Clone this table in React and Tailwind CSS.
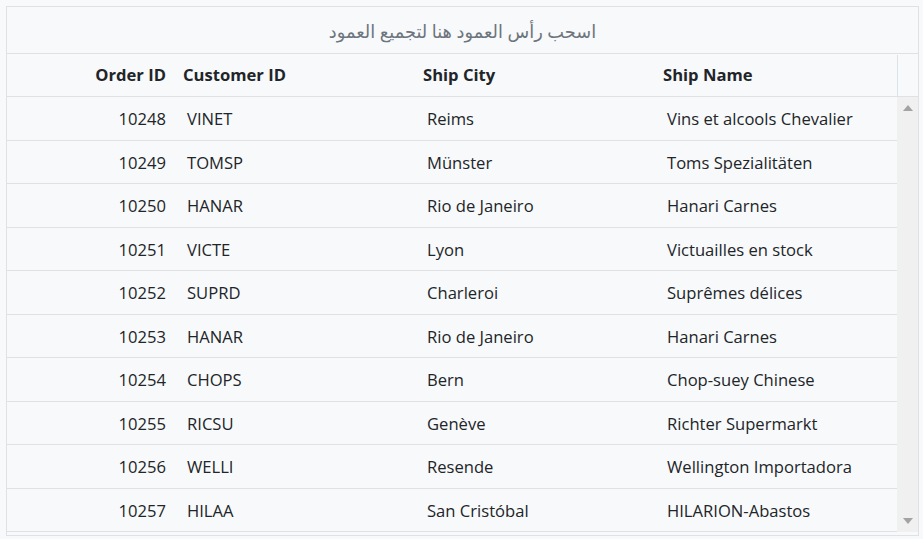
const orders = [
  { id: 10248, customer: "VINET", city: "Reims", name: "Vins et alcools Chevalier" },
  { id: 10249, customer: "TOMSP", city: "Münster", name: "Toms Spezialitäten" },
  { id: 10250, customer: "HANAR", city: "Rio de Janeiro", name: "Hanari Carnes" },
  { id: 10251, customer: "VICTE", city: "Lyon", name: "Victuailles en stock" },
  { id: 10252, customer: "SUPRD", city: "Charleroi", name: "Suprêmes délices" },
  { id: 10253, customer: "HANAR", city: "Rio de Janeiro", name: "Hanari Carnes" },
  { id: 10254, customer: "CHOPS", city: "Bern", name: "Chop-suey Chinese" },
  { id: 10255, customer: "RICSU", city: "Genève", name: "Richter Supermarkt" },
  { id: 10256, customer: "WELLI", city: "Resende", name: "Wellington Importadora" },
  { id: 10257, customer: "HILAA", city: "San Cristóbal", name: "HILARION-Abastos" },
];

function Scrollbar() {
  return (
    <div className="flex w-[21px] shrink-0 flex-col items-center justify-between bg-[#f0f0f0] py-[8px]">
      <span className="h-0 w-0 border-x-[5px] border-b-[6px] border-x-transparent border-b-[#a3a3a3]" />
      <span className="h-0 w-0 border-x-[5px] border-t-[6px] border-x-transparent border-t-[#a3a3a3]" />
    </div>
  );
}

export default function App() {
  return (
    <div className="min-h-[539px] w-full bg-[#f8f9fa] pl-[6px] pt-[6px] font-['Open_Sans','Noto_Sans','DejaVu_Sans',sans-serif] text-[#212529]">
      <div className="flex h-[530px] w-[913px] flex-col border border-[#dee2e6] bg-[#f8f9fa]">
        <div
          dir="rtl"
          className="flex h-[47px] shrink-0 items-center justify-center border-b border-[#dee2e6] pt-[2px] text-[17.8px] text-[#6c757d]"
        >
          اسحب رأس العمود هنا لتجميع العمود
        </div>

        <div className="flex h-[43px] shrink-0 border-b border-[#dee2e6] pt-[1px] text-[16.6px] font-bold">
          <div className="flex w-[168px] items-center justify-end pr-[9px]">Order ID</div>
          <div className="flex w-[240px] items-center pl-[8px]">Customer ID</div>
          <div className="flex w-[240px] items-center pl-[8px]">Ship City</div>
          <div className="flex w-[242px] items-center pl-[8px]">Ship Name</div>
          <div className="flex-1 border-l border-[#dee2e6]" />
        </div>

        <div className="flex h-[435px] shrink-0">
          <div className="flex-1">
            {orders.map((o) => (
              <div key={o.id} className="flex h-[43.5px] border-b border-[#dee2e6] pt-[3px] text-[16.6px]">
                <div className="flex w-[168px] items-center justify-end pr-[9px]">{o.id}</div>
                <div className="flex w-[240px] items-center pl-[12px]">{o.customer}</div>
                <div className="flex w-[240px] items-center pl-[12px]">{o.city}</div>
                <div className="flex w-[242px] items-center pl-[12px]">{o.name}</div>
              </div>
            ))}
          </div>
          <Scrollbar />
        </div>
      </div>
    </div>
  );
}
